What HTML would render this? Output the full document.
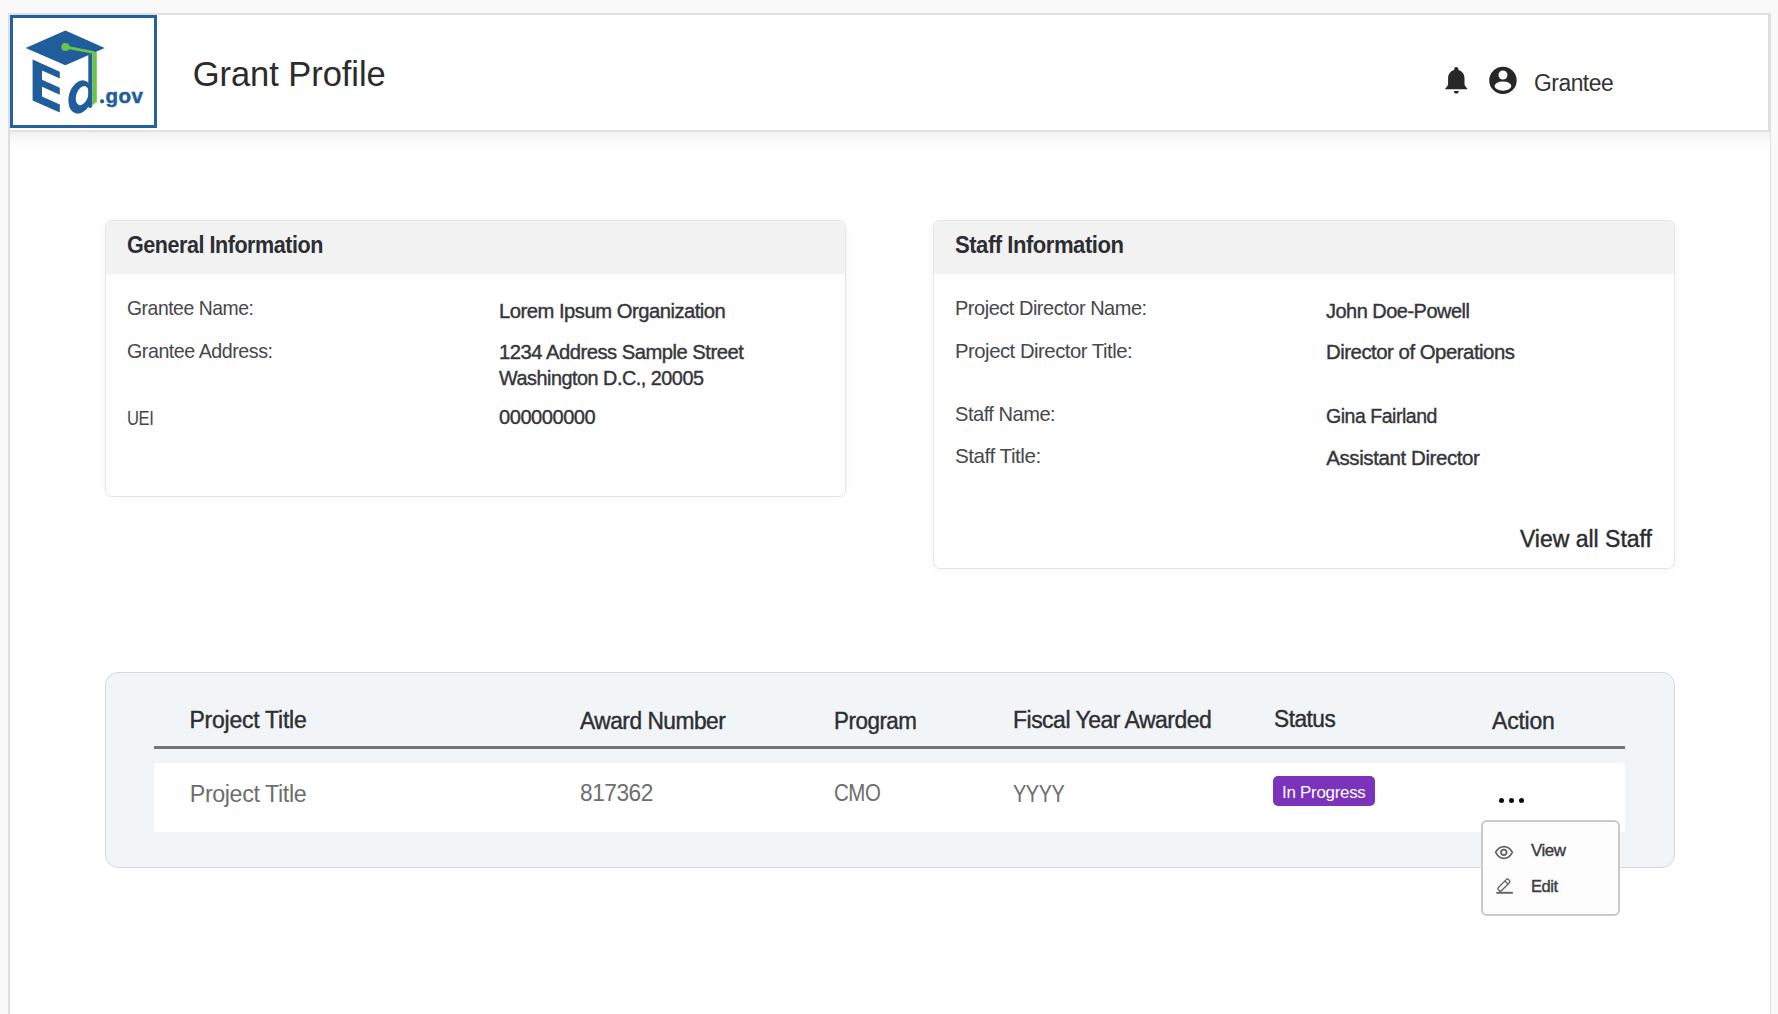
<!DOCTYPE html>
<html>
<head>
<meta charset="utf-8">
<style>
html,body{margin:0;padding:0;}
body{width:1778px;height:1014px;overflow:hidden;background:#f9f9f9;position:relative;font-family:"Liberation Sans",sans-serif;}
.abs{position:absolute;}
.frame{position:absolute;left:8px;top:13px;width:1760px;height:1010px;background:#ffffff;border-left:2px solid #dedede;border-right:1px solid #e0e0e0;}
.hdr{position:absolute;left:8px;top:13px;width:1758px;height:115px;background:#ffffff;border-top:2px solid #e0e0e0;border-left:2px solid #dedede;border-right:3px solid #dedede;border-bottom:2px solid #e1e3e3;}
.hshadow{position:absolute;left:10px;top:132px;width:1760px;height:18px;background:linear-gradient(rgba(0,0,0,0.06),rgba(0,0,0,0.025) 40%,rgba(0,0,0,0));}
.logo{position:absolute;left:10px;top:15px;width:141px;height:107px;border:3px solid #23619f;background:#fff;}
.card{position:absolute;background:#fefefe;border:1px solid #e5e5e5;border-radius:7px;box-shadow:0 0 12px rgba(0,0,0,0.045);overflow:hidden;}
.card .ch{position:absolute;left:0;top:0;right:0;height:53px;background:#f2f2f2;}
.tcard{position:absolute;left:105px;top:672px;width:1568px;height:194px;background:#f2f5f8;border:1px solid #d6d8db;border-radius:13px;}
.hline{position:absolute;left:154px;top:746px;width:1471px;height:2.5px;background:#727477;}
.row{position:absolute;left:154px;top:762.5px;width:1471px;height:69.5px;background:#ffffff;border-radius:3px;}
.badge{position:absolute;left:1273px;top:776px;width:102px;height:30px;background:#7b33bb;border-radius:5px;}
.dot{position:absolute;width:5.4px;height:5.4px;border-radius:50%;background:#0d0d0d;}
.dd{position:absolute;left:1481px;top:820px;width:135px;height:92px;border:2px solid #c9c9c9;border-radius:6px;background:#fdfdfd;}
.t{position:absolute;white-space:nowrap;transform-origin:0 0;line-height:normal;font-weight:400;}
.t.b{font-weight:700;}
.t.m{-webkit-text-stroke:0.4px currentColor;}
.t.s{-webkit-text-stroke:0.9px currentColor;}
</style>
</head>
<body>
<div class="frame"></div>
<div class="hdr"></div>
<div class="hshadow"></div>
<div class="logo"></div>
<svg class="abs" style="left:0;top:0" width="160" height="130" viewBox="0 0 160 130">
  <!-- cap -->
  <polygon points="25.6,47.9 65.4,30.6 104.7,47.9 65.4,65.3" fill="#1f5d9b"/>
  <!-- E -->
  <path d="M32.6,59.6 L59.8,71.8 L59.8,78.4 L42,70.4 L42,79.8 L59.8,87.7 L59.8,94.8 L42,86.8 L42,96.6 L59.8,104.6 L59.8,112.5 L32.6,100.4 Z" fill="#1f5d9b"/>
  <!-- d stem -->
  
  <!-- d bowl -->
  <ellipse cx="80.3" cy="97" rx="11.4" ry="17" transform="rotate(16 80.3 97)" fill="#1f5d9b"/>
  <ellipse cx="82.2" cy="95.6" rx="5.9" ry="9.9" transform="rotate(20 82.2 95.6)" fill="#ffffff"/>
  <polygon points="88.3,55 92.2,53.4 92.2,107 89.5,108.2 88.3,107" fill="#1f5d9b"/>
  <!-- green tassel -->
  <circle cx="65.4" cy="47" r="4.1" fill="#6cc24a"/>
  <polygon points="65.4,45.6 94.5,51.2 94.5,54 65.4,48.4" fill="#6cc24a"/>
  <polygon points="92.2,51.4 96.8,52.2 96.8,102.7 94.5,102.7 94.5,104.5 92.2,104.5" fill="#6cc24a"/>
  <circle cx="102.1" cy="101.3" r="2.1" fill="#1f5d9b"/><text x="105.4" y="103.2" font-family="Liberation Sans" font-weight="700" font-size="20.5" fill="#1f5d9b" stroke="#1f5d9b" stroke-width="0.5" letter-spacing="0.5">gov</text>
</svg>

<!-- header icons -->
<svg class="abs" style="left:1440px;top:62px" width="32" height="36" viewBox="0 0 32 36">
  <path fill="#272727" d="M16.3,5 C17.5,5 18.4,5.9 18.4,7 V8 C22,9 24.5,12 24.5,16.2 V22.6 Q25,24.6 27.3,26.4 V27.3 H5.3 V26.4 Q7.6,24.6 8.1,22.6 V16.2 C8.1,12 10.6,9 14.2,8 V7 C14.2,5.9 15.1,5 16.3,5 Z M13.8,28.9 H18.8 C18.8,30.5 17.7,31.6 16.3,31.6 C14.9,31.6 13.8,30.5 13.8,28.9 Z"/>
</svg>
<svg class="abs" style="left:1486px;top:64px" width="34" height="34" viewBox="0 0 34 34">
  <defs><clipPath id="cc"><circle cx="16.95" cy="16.4" r="13.7"/></clipPath></defs>
  <circle cx="16.95" cy="16.4" r="13.7" fill="#272727"/>
  <circle cx="16.95" cy="11.05" r="4.5" fill="#ffffff"/>
  <ellipse cx="16.95" cy="22.1" rx="8.35" ry="4.6" fill="#ffffff" clip-path="url(#cc)"/>
</svg>

<!-- cards -->
<div class="card" style="left:105px;top:220px;width:739px;height:275px;"><div class="ch"></div></div>
<div class="card" style="left:933px;top:220px;width:740px;height:347px;"><div class="ch"></div></div>

<div class="tcard"></div>
<div class="hline"></div>
<div class="row"></div>
<div class="badge"></div>
<div class="dot" style="left:1498.6px;top:797.6px"></div>
<div class="dot" style="left:1508.6px;top:797.6px"></div>
<div class="dot" style="left:1518.7px;top:797.6px"></div>

<div class="dd"></div>
<svg class="abs" style="left:1490px;top:840px" width="28" height="60" viewBox="0 0 28 60">
  <path d="M5.6,12.4 C7.8,8.3 10.7,6.6 14,6.6 C17.3,6.6 20.2,8.3 22.4,12.4 C20.2,16.5 17.3,18.4 14,18.4 C10.7,18.4 7.8,16.5 5.6,12.4 Z" fill="none" stroke="#626262" stroke-width="1.6" stroke-linejoin="round"/>
  <circle cx="13.8" cy="12.3" r="2.75" fill="none" stroke="#626262" stroke-width="1.8"/>
  <g transform="translate(13.9 45.1) rotate(-45)">
    <rect x="-7.2" y="-2.25" width="14.4" height="4.5" rx="1.7" fill="none" stroke="#626262" stroke-width="1.35"/>
    <line x1="3.6" y1="-2.25" x2="3.6" y2="2.25" stroke="#626262" stroke-width="1.3"/>
  </g>
  <line x1="6.3" y1="52.8" x2="22.9" y2="52.8" stroke="#626262" stroke-width="1.9"/>
</svg>

<div class="t" id="t0" style="left:192.70px;top:55.00px;font-size:34.5px;color:#2b2b2b;letter-spacing:-0.051px;transform:scaleX(1.0000)">Grant Profile</div>
<div class="t" id="t1" style="left:1533.80px;top:69.50px;font-size:23.5px;color:#333333;letter-spacing:-0.500px;transform:scaleX(0.9725)">Grantee</div>
<div class="t b" id="t2" style="left:127.20px;top:231.50px;font-size:23px;color:#2c2e33;letter-spacing:-0.500px;transform:scaleX(0.9370)">General Information</div>
<div class="t b" id="t3" style="left:954.90px;top:231.70px;font-size:23px;color:#2c2e33;letter-spacing:-0.500px;transform:scaleX(0.9597)">Staff Information</div>
<div class="t" id="t4" style="left:127.10px;top:295.90px;font-size:21px;color:#46484c;letter-spacing:-0.500px;transform:scaleX(0.9219)">Grantee Name:</div>
<div class="t" id="t5" style="left:127.10px;top:338.80px;font-size:21px;color:#46484c;letter-spacing:-0.500px;transform:scaleX(0.9366)">Grantee Address:</div>
<div class="t" id="t6" style="left:127.10px;top:405.90px;font-size:21px;color:#46484c;letter-spacing:-0.500px;transform:scaleX(0.7920)">UEI</div>
<div class="t" id="t7" style="left:955.30px;top:295.90px;font-size:21px;color:#46484c;letter-spacing:-0.500px;transform:scaleX(0.9514)">Project Director Name:</div>
<div class="t" id="t8" style="left:955.30px;top:338.50px;font-size:21px;color:#46484c;letter-spacing:-0.500px;transform:scaleX(0.9658)">Project Director Title:</div>
<div class="t" id="t9" style="left:955.30px;top:401.60px;font-size:21px;color:#46484c;letter-spacing:-0.500px;transform:scaleX(0.9539)">Staff Name:</div>
<div class="t" id="t10" style="left:955.30px;top:444.30px;font-size:21px;color:#46484c;letter-spacing:-0.500px;transform:scaleX(0.9848)">Staff Title:</div>
<div class="t m" id="t11" style="left:498.80px;top:298.60px;font-size:20.5px;color:#34363a;letter-spacing:-0.500px;transform:scaleX(0.9861)">Lorem Ipsum Organization</div>
<div class="t m" id="t12" style="left:498.80px;top:339.80px;font-size:20.5px;color:#34363a;letter-spacing:-0.500px;transform:scaleX(0.9852)">1234 Address Sample Street</div>
<div class="t m" id="t13" style="left:498.80px;top:365.90px;font-size:20.5px;color:#34363a;letter-spacing:-0.500px;transform:scaleX(0.9664)">Washington D.C., 20005</div>
<div class="t m" id="t14" style="left:498.80px;top:405.40px;font-size:20.5px;color:#34363a;letter-spacing:-0.500px;transform:scaleX(0.9807)">000000000</div>
<div class="t m" id="t15" style="left:1326.20px;top:298.70px;font-size:20.5px;color:#34363a;letter-spacing:-0.500px;transform:scaleX(0.9724)">John Doe-Powell</div>
<div class="t m" id="t16" style="left:1326.20px;top:340.00px;font-size:20.5px;color:#34363a;letter-spacing:-0.500px;transform:scaleX(0.9943)">Director of Operations</div>
<div class="t m" id="t17" style="left:1326.20px;top:404.40px;font-size:20.5px;color:#34363a;letter-spacing:-0.500px;transform:scaleX(0.9522)">Gina Fairland</div>
<div class="t m" id="t18" style="left:1326.20px;top:446.20px;font-size:20.5px;color:#34363a;letter-spacing:-0.407px;transform:scaleX(1.0000)">Assistant Director</div>
<div class="t m" id="t19" style="left:1519.90px;top:526.00px;font-size:23px;color:#2a2c30;letter-spacing:-0.003px;transform:scaleX(1.0000)">View all Staff</div>
<div class="t m" id="t20" style="left:189.50px;top:707.40px;font-size:23px;color:#2d2f33;letter-spacing:-0.248px;transform:scaleX(1.0000)">Project Title</div>
<div class="t m" id="t21" style="left:579.70px;top:708.00px;font-size:23px;color:#2d2f33;letter-spacing:-0.500px;transform:scaleX(0.9888)">Award Number</div>
<div class="t m" id="t22" style="left:834.20px;top:708.00px;font-size:23px;color:#2d2f33;letter-spacing:-0.500px;transform:scaleX(0.9741)">Program</div>
<div class="t m" id="t23" style="left:1013.25px;top:707.40px;font-size:23px;color:#2d2f33;letter-spacing:-0.500px;transform:scaleX(0.9986)">Fiscal Year Awarded</div>
<div class="t m" id="t24" style="left:1274.20px;top:705.70px;font-size:23px;color:#2d2f33;letter-spacing:-0.500px;transform:scaleX(0.9856)">Status</div>
<div class="t m" id="t25" style="left:1492.10px;top:708.00px;font-size:23px;color:#2d2f33;letter-spacing:-0.248px;transform:scaleX(1.0000)">Action</div>
<div class="t" id="t26" style="left:189.80px;top:780.90px;font-size:23.3px;color:#6e6e6e;letter-spacing:-0.404px;transform:scaleX(1.0000)">Project Title</div>
<div class="t" id="t27" style="left:579.70px;top:780.20px;font-size:23.3px;color:#6e6e6e;letter-spacing:-0.500px;transform:scaleX(0.9747)">817362</div>
<div class="t" id="t28" style="left:834.20px;top:780.20px;font-size:23.3px;color:#6e6e6e;letter-spacing:-0.500px;transform:scaleX(0.8801)">CMO</div>
<div class="t" id="t29" style="left:1013.25px;top:780.50px;font-size:23.3px;color:#6e6e6e;letter-spacing:-0.500px;transform:scaleX(0.8557)">YYYY</div>
<div class="t" id="t30" style="left:1282.10px;top:783.30px;font-size:17px;color:#ffffff;letter-spacing:-0.315px;transform:scaleX(1.0000)">In Progress</div>
<div class="t m" id="t31" style="left:1530.70px;top:841.40px;font-size:17px;color:#3a3b3f;letter-spacing:-0.500px;transform:scaleX(0.9957)">View</div>
<div class="t m" id="t32" style="left:1530.70px;top:877.10px;font-size:17px;color:#3a3b3f;letter-spacing:-0.500px;transform:scaleX(0.9739)">Edit</div>
</body>
</html>
